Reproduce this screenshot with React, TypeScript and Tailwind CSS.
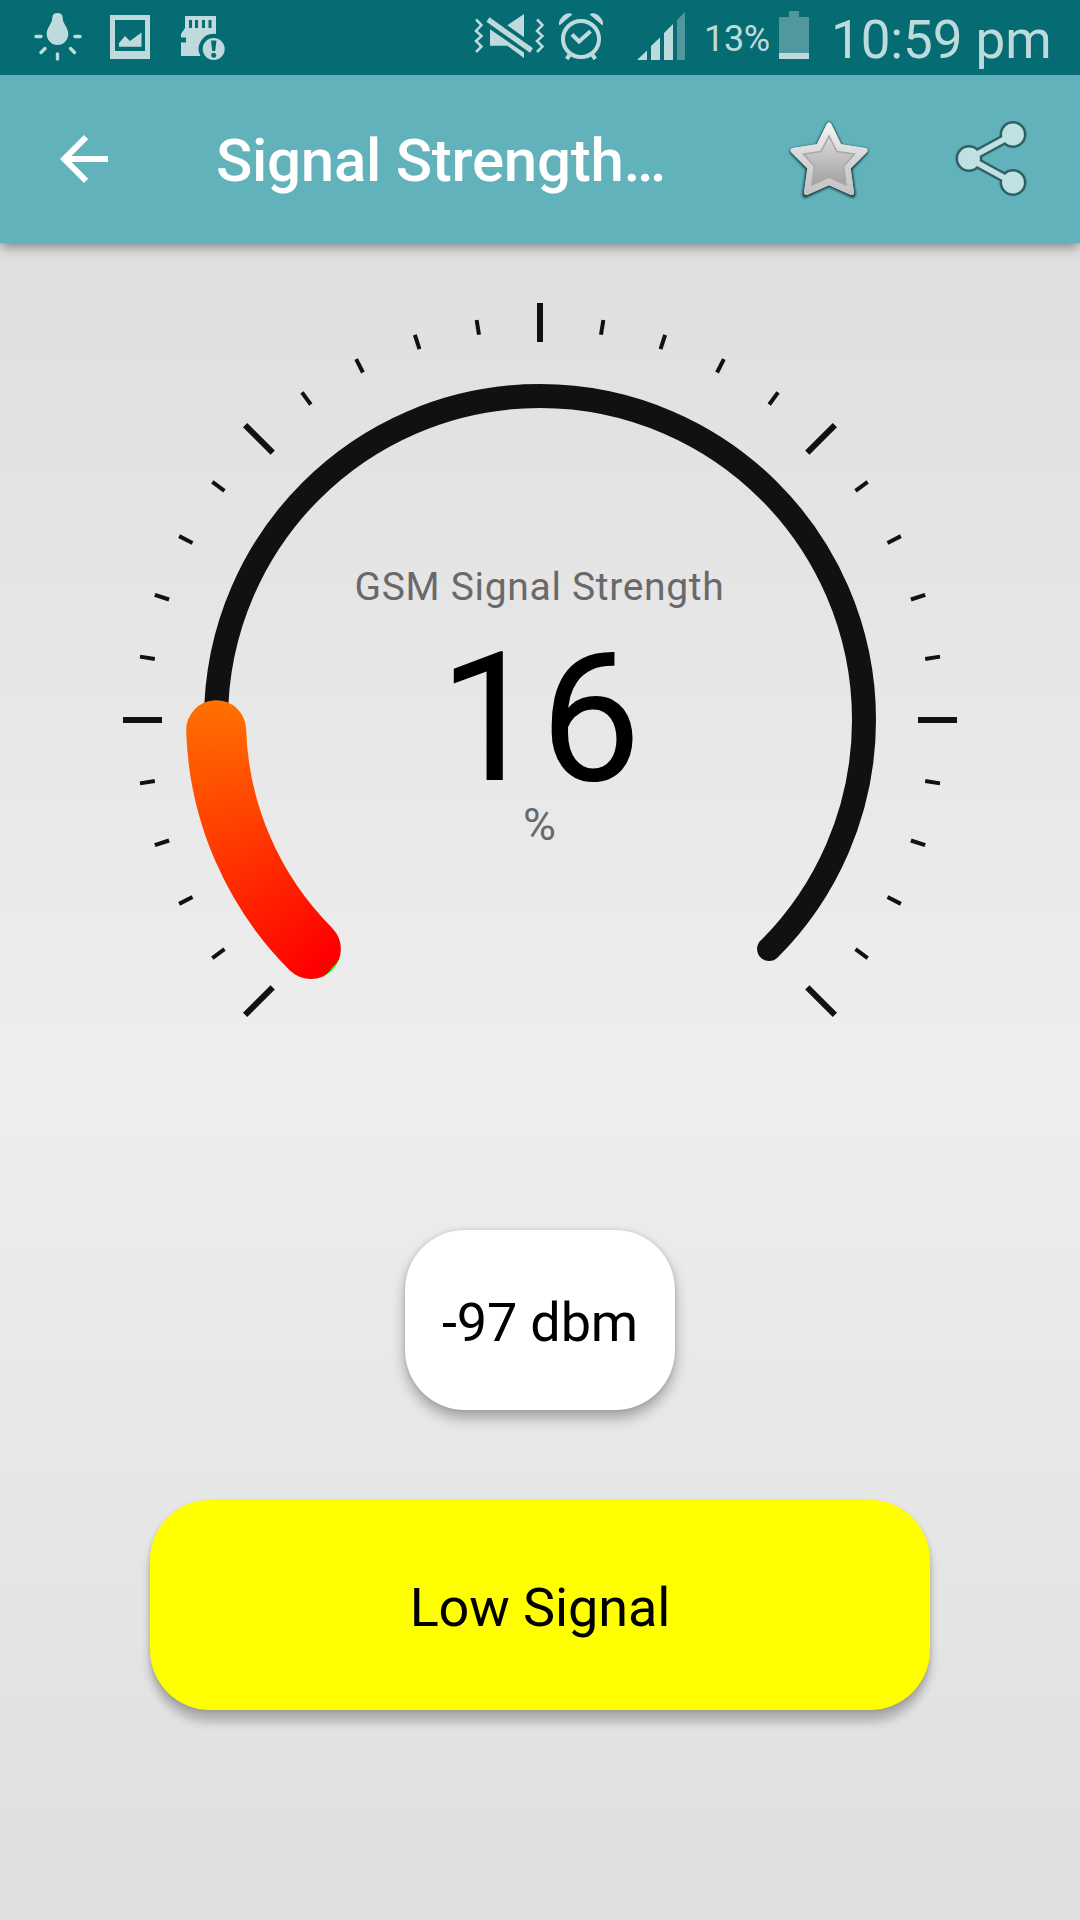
import { useState } from 'react';

interface Reading {
  percent: number;
  dbm: number;
  label: string;
}

const LIGHT = '#bfdadc';
const DIM = '#50989d';

// Gauge geometry
const CX = 540;
const CY = 477;
const RADIUS = 324;
const START = 135;
const SWEEP = 270;

const point = (deg: number, r: number) => {
  const rad = (deg * Math.PI) / 180;
  return [CX + r * Math.cos(rad), CY + r * Math.sin(rad)];
};

const arc = (from: number, to: number, r: number) => {
  const [x1, y1] = point(from, r);
  const [x2, y2] = point(to, r);
  return `M${x1} ${y1}A${r} ${r} 0 ${to - from > 180 ? 1 : 0} 1 ${x2} ${y2}`;
};

function StatusBar() {
  return (
    <div className="relative z-10 h-[75px] bg-[#056c73] text-[#bfdadc] flex items-center pl-[32px] pr-[27px]">
      {/* Notifications */}
      <svg className="w-[52px] h-[75px] shrink-0" viewBox="32 0 52 75">
        <path d="M52.3 18q0-5 5.2-5t5.2 5c0 6 5.6 9 5.6 16a10.8 11 0 0 1-21.6 0c0-7 5.6-10 5.6-16z" fill={LIGHT} />
        <path d="M36 36.5h5M75 36.5h5M57.5 54v5M45 48.5l-4 4M70.5 48.5l4 4" stroke={LIGHT} strokeWidth="3.4" strokeLinecap="round" />
      </svg>
      <svg className="w-[40px] h-[75px] shrink-0 ml-[26px]" viewBox="110 0 40 75">
        <path d="M110 15h40v44h-40zM115 20v31h30V20z" fill={LIGHT} fillRule="evenodd" />
        <path d="M119 43l6-7 5 5 11.5-8.5v14.3H119z" fill={LIGHT} />
      </svg>
      <svg className="w-[45px] h-[75px] shrink-0 ml-[31px]" viewBox="181 0 45 75">
        <path d="M185 16h31v18a15 15 0 0 0-15.5 22H181V42.5h5v-5h-5V34l4-6z" fill={LIGHT} />
        <path d="M189 20h3v8h-3zM195 20h3v8h-3zM202 20h3v8h-3zM208.5 20h3v8h-3z" fill="#056c73" />
        <circle cx="213.7" cy="49" r="11" fill={LIGHT} />
        <path d="M211 40.5h5.5l-1.3 10.5h-3z" fill="#056c73" />
        <circle cx="213.7" cy="55.3" r="2.5" fill="#056c73" />
      </svg>

      {/* System icons */}
      <svg className="w-[70px] h-[75px] shrink-0 ml-auto" viewBox="474 0 70 75">
        <path d="M476 19.5l5.5 5.500-5.5 6 5.5 5-5.500 5 5.500 5.500-5.500 5.500M537 19.500l5.500 5.500-5.500 6 5.500 5-5.500 5 5.500 5.500-5.500 5.500" fill="none" stroke={LIGHT} strokeWidth="2.5" />
        <path d="M524 14v23.3l-16.7-12zM490 29.3l34 23.3V58l-16.7-12.3H490z" fill={LIGHT} />
        <path d="M488 19.5l43.5 31" stroke={LIGHT} strokeWidth="5.3" />
      </svg>
      <svg className="w-[46px] h-[75px] shrink-0 ml-[14px]" viewBox="558 0 46 75">
        <circle cx="581" cy="39" r="18" fill="none" stroke={LIGHT} strokeWidth="4" />
        <path d="M572 34.5l7 7 11.5-10.3" fill="none" stroke={LIGHT} strokeWidth="4" />
        <path d="M559.5 25.5q-2-4 2.500-8.500 5-5.500 10.500-2.800zM602.500 25.500q2-4-2.500-8.500-5-5.500-10.500-2.800z" fill={LIGHT} />
        <path d="M569.5 55l-2.8 4M592.5 55l2.8 4" stroke={LIGHT} strokeWidth="4" />
      </svg>
      <svg className="w-[49px] h-[75px] shrink-0 ml-[33px]" viewBox="638 0 49 75">
        <path d="M638 60l10-9.5V60zM652 60V46l9-8.5V60zM665 60V33l9-9V60z" fill={LIGHT} />
        <path d="M678 60V20l8-8v48z" fill={DIM} />
      </svg>
      <span className="text-[36px] leading-none w-[66px] ml-[18px] pt-[3px] tracking-[-0.3px] whitespace-nowrap">13%</span>
      <svg className="w-[30px] h-[75px] shrink-0 ml-[9px]" viewBox="779 0 30 75">
        <path d="M779 53V17h10v-6h10v6h10v36z" fill={DIM} />
        <path d="M779 53h30v6h-30z" fill={LIGHT} />
      </svg>
      <span className="text-[53px] leading-none w-[222px] ml-[22px] pt-[5px] tracking-[-0.1px] whitespace-nowrap">10:59 pm</span>
    </div>
  );
}

function AppBar() {
  return (
    <header className="relative h-[168px] bg-[#61b2ba] flex items-center pl-[48px] pr-[52px] shadow-[0_3px_12px_rgba(0,0,0,0.45)]">
      <button>
        <svg className="w-[72px] h-[72px]" viewBox="0 0 24 24" fill="white">
          <path d="M20 11H7.83l5.59-5.59L12 4l-8 8 8 8 1.41-1.41L7.83 13H20z" />
        </svg>
      </button>
      <h1 className="text-white text-[60px] leading-none font-medium ml-[96px] pt-[4px] tracking-[-0.26px] whitespace-nowrap">Signal Strength…</h1>
      <button className="ml-auto">
        <svg className="w-[84px] h-[84px]" viewBox="787 117 84 84">
          <defs>
            <linearGradient id="starRim" x1="0" y1="0" x2="0" y2="1">
              <stop offset="0" stopColor="#f2f2f2" />
              <stop offset="0.5" stopColor="#d6d6d6" />
              <stop offset="1" stopColor="#c4c4c4" />
            </linearGradient>
            <linearGradient id="starFill" x1="0" y1="0" x2="0" y2="1">
              <stop offset="0" stopColor="#dadada" />
              <stop offset="1" stopColor="#a2a2a2" />
            </linearGradient>
            <filter id="starShade" x="-20%" y="-20%" width="140%" height="140%">
              <feGaussianBlur stdDeviation="1.3" />
            </filter>
            <filter id="starSoft" x="-10%" y="-10%" width="120%" height="120%">
              <feGaussianBlur stdDeviation="0.6" />
            </filter>
          </defs>
          <path d="M829 125.500l11 22 25 4-16 17 3.500 26-23.500-11-23.500 11 3.500-26-16-17 25-4z" fill="#1f4448" stroke="#1f4448" strokeWidth="6.5" strokeLinejoin="round" filter="url(#starShade)" />
          <path d="M829 125l10.500 21.500 25.500 4-17 17 3.500 25-22.500-10-22.500 10 3.500-25-17-17 25.500-4z" fill="#d6d6d6" stroke="#d6d6d6" strokeWidth="5" strokeLinejoin="round" />
          <path d="M829 125l10.500 21.500 25.500 4-17 17 3.500 25-22.500-10-22.500 10 3.500-25-17-17 25.500-4z" fill="url(#starRim)" stroke="url(#starRim)" strokeWidth="5" strokeLinejoin="round" />
          <path d="M829 136l8 15.500 17.500 2.500-11 12.500 2.500 18.500-17-8-17 8 2.500-18.500-11-12.500 17.500-2.500z" fill="url(#starFill)" stroke="#a8a8a8" strokeWidth="1.6" filter="url(#starSoft)" />
        </svg>
      </button>
      <button className="ml-[81px]">
        <svg className="w-[76px] h-[84px]" viewBox="952 117 76 84">
          <g stroke="#2f6064" fill="#2f6064">
            <path d="M1013 134.5l-44 24 44 24" fill="none" strokeWidth="10.5" />
            <circle cx="1013" cy="134.5" r="13.5" stroke="none" />
            <circle cx="969" cy="158.5" r="13.5" stroke="none" />
            <circle cx="1013" cy="182.5" r="13.5" stroke="none" />
          </g>
          <g stroke="#bfe1e4" fill="#bfe1e4">
            <path d="M1013 134.5l-44 24 44 24" fill="none" strokeWidth="5.5" />
            <circle cx="1013" cy="134.5" r="10.9" stroke="none" />
            <circle cx="969" cy="158.5" r="10.9" stroke="none" />
            <circle cx="1013" cy="182.5" r="10.9" stroke="none" />
          </g>
        </svg>
      </button>
    </header>
  );
}

function Gauge({ percent }: { percent: number }) {
  const ticks = Array.from({ length: 31 }, (_, i) => i);

  return (
    <svg className="block w-[1080px] h-[840px]" viewBox="0 0 1080 840">
      {ticks.map((i) => {
        const major = i % 5 === 0;
        const [x1, y1] = point(START + i * 9, major ? 378 : 390);
        const [x2, y2] = point(START + i * 9, major ? 417 : 405);
        return <line key={i} x1={x1} y1={y1} x2={x2} y2={y2} stroke="#111" strokeWidth={major ? 6 : 4} />;
      })}
      <path d={arc(START, START + SWEEP, RADIUS)} fill="none" stroke="#111" strokeWidth="24" strokeLinecap="round" />

      {/* Progress, coloured by a sweep gradient */}
      <mask id="progress" maskUnits="userSpaceOnUse" x="0" y="0" width="1080" height="840">
        <path d={arc(START, START + (SWEEP * percent) / 100, RADIUS)} fill="none" stroke="white" strokeWidth="60" strokeLinecap="round" />
      </mask>
      <g mask="url(#progress)">
        <foreignObject x="140" y="77" width="800" height="800">
          <div className="w-[800px] h-[800px] bg-[conic-gradient(from_220deg,#ff0000_0deg,#ff0000_2deg,#ffff00_118deg,#00ff00_240deg,#00ff00_360deg)]" />
        </foreignObject>
      </g>

      <g textAnchor="middle">
        <text x="539.5" y="357" fontSize="39" letterSpacing="0.68" fill="#696969">GSM Signal Strength</text>
        <text x="540" y="537" fontSize="180" fill="#000">{percent}</text>
        <text x="539.5" y="597" fontSize="45" fill="#696969">%</text>
      </g>
    </svg>
  );
}

export default function App() {
  const [reading] = useState<Reading>({ percent: 16, dbm: -97, label: 'Low Signal' });

  return (
    <div className="w-[1080px] h-[1920px] overflow-hidden flex flex-col font-['Roboto',sans-serif] text-black">
      <StatusBar />
      <AppBar />
      <main className="flex-1 flex flex-col items-center bg-linear-to-b from-[#dfdfdf] via-[#eeeeee] to-[#dfdfdf]">
        <Gauge percent={reading.percent} />
        <div className="mt-[147px] w-[270px] h-[180px] rounded-[60px] bg-white flex items-center justify-center shadow-[0_8px_14px_rgba(0,0,0,0.3),0_0_4px_rgba(0,0,0,0.12)]">
          <span className="text-[54px] leading-none pt-[6px] tracking-[-0.15px] whitespace-nowrap">{reading.dbm} dbm</span>
        </div>
        <div className="mt-[90px] w-[780px] h-[210px] rounded-[60px] bg-[#ffff00] flex items-center justify-center shadow-[0_12px_10px_rgba(0,0,0,0.22),0_2px_5px_rgba(0,0,0,0.15)]">
          <span className="text-[54px] leading-none pt-[6px] tracking-[-0.1px] whitespace-nowrap">{reading.label}</span>
        </div>
      </main>
    </div>
  );
}
